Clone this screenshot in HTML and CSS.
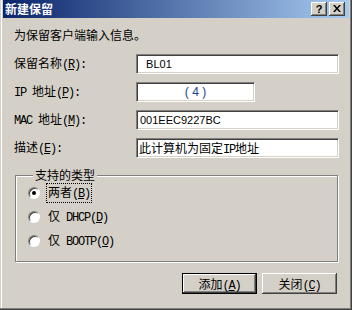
FILE: index.html
```html
<!DOCTYPE html>
<html lang="zh-CN">
  <head>
    <meta charset="UTF-8" />
    <title>新建保留</title>
    <link rel="stylesheet" href="styles.css">
  </head>
  <body>
    <div class="window">
      <div class="titlebar">
        <span class="title">新建保留</span>
        <div class="caption-buttons">
          <button class="caption-btn help">?</button>
          <button class="caption-btn close">
            <svg width="8" height="7" viewBox="0 0 8 7">
              <path d="M0 0h2l2 2.5L6 0h2L5 3.5 8 7H6L4 4.5 2 7H0l3-3.5z" fill="#000" />
            </svg>
          </button>
        </div>
      </div>

      <div class="content">
        <p class="intro">为保留客户端输入信息。</p>

        <div class="fields">
          <label class="field-label" for="name">保留名称<span class="lat">(<u>R</u>):</span></label>
          <input class="edit name-edit" id="name" value="  BL01" readonly />

          <label class="field-label" for="ip"><span class="lat">IP </span>地址<span class="lat">(<u>P</u>):</span></label>
          <div class="edit ip-edit" id="ip">( 4 )</div>

          <label class="field-label" for="mac"><span class="lat">MAC </span>地址<span class="lat">(<u>M</u>):</span></label>
          <input class="edit" id="mac" value="001EEC9227BC" readonly />

          <label class="field-label" for="desc">描述<span class="lat">(<u>E</u>):</span></label>
          <div class="edit desc-edit" id="desc">此计算机为固定<span class="lat">IP</span>地址</div>
        </div>

        <fieldset class="group">
          <legend>支持的类型</legend>
          <label class="radio-row">
            <span class="radio checked"></span>
            <span class="radio-text focused">两者<span class="lat">(<u>B</u>)</span></span>
          </label>
          <label class="radio-row">
            <span class="radio"></span>
            <span class="radio-text">仅<span class="lat"> DHCP(<u>D</u>)</span></span>
          </label>
          <label class="radio-row">
            <span class="radio"></span>
            <span class="radio-text">仅<span class="lat"> BOOTP(<u>O</u>)</span></span>
          </label>
        </fieldset>

        <div class="actions">
          <button class="push-btn default">添加<span class="lat">(<u>A</u>)</span></button>
          <button class="push-btn">关闭<span class="lat">(<u>C</u>)</span></button>
        </div>
      </div>
    </div>
  </body>
</html>
```

FILE: styles.css
```css
* {
  margin: 0;
  padding: 0;
  box-sizing: border-box;
}

body {
  font-family: "Noto Sans CJK SC", sans-serif;
  font-size: 12px;
  line-height: 16px;
  color: #000;
  background-color: #d4d0c8;
}

/* latin parts of the labels, narrow like the old bitmap font */
.lat {
  font-family: "Liberation Mono", monospace;
  letter-spacing: -1.2px;
}

.window {
  width: 352px;
  height: 310px;
  background-color: #d4d0c8;
  padding: 0 3px 3px 3px;
  box-shadow: inset -1px -1px #404040, inset -2px -2px #808080,
    inset 1px 0 #d4d0c8, inset 2px 0 #fff;
}

.titlebar {
  height: 18px;
  background: linear-gradient(to right, #0a246a, #a6caf0);
  display: flex;
  align-items: center;
  justify-content: space-between;
  padding: 0 4px 0 2px;
}

.title {
  font-weight: 700;
  font-size: 12px;
  color: #fff;
}

.caption-buttons {
  display: flex;
  gap: 2px;
}

.caption-btn {
  width: 16px;
  height: 14px;
  background-color: #d4d0c8;
  border: none;
  box-shadow: inset -1px -1px #404040, inset 1px 1px #fff,
    inset -2px -2px #808080;
  font-family: "Liberation Sans", sans-serif;
  font-weight: 700;
  font-size: 11px;
  line-height: 14px;
  display: flex;
  align-items: center;
  justify-content: center;
  padding-bottom: 1px;
}

.content {
  padding: 9px 10px 0 11px;
}

.intro {
  margin-bottom: 11px;
}

.fields {
  display: grid;
  grid-template-columns: 122px 1fr;
  grid-auto-rows: 20px;
  row-gap: 8px;
  align-items: center;
}

u {
  text-underline-offset: 1px;
}

.edit {
  height: 20px;
  width: 100%;
  background-color: #fff;
  border: 1px solid;
  border-color: #808080 #fff #fff #808080;
  box-shadow: inset 1px 1px #404040, inset -1px -1px #d4d0c8;
  font-family: "Liberation Sans", sans-serif;
  font-size: 11px;
  padding: 0 3px;
  outline: none;
  color: #000;
}

.ip-edit {
  width: 119px;
  text-align: center;
  line-height: 18px;
  color: #1a3c8c;
  font-size: 12px;
}

.desc-edit {
  font-family: "Noto Sans CJK SC", sans-serif;
  font-size: 12px;
  line-height: 18px;
  padding-left: 2px;
}

.group {
  margin: 10px 1px 0 1px;
  border: 1px solid #808080;
  box-shadow: inset 1px 1px #fff, 1px 1px #fff;
  padding: 3px 0 12px 12px;
  display: flex;
  flex-direction: column;
  gap: 8px;
}

.group legend {
  line-height: 14px;
  margin-left: 5px;
  padding: 0 2px;
  background-color: #d4d0c8;
}

.radio-row {
  display: flex;
  align-items: center;
  height: 16px;
  gap: 7px;
}

.radio {
  width: 12px;
  height: 12px;
  border-radius: 50%;
  background-color: #fff;
  border: 1px solid;
  border-color: #808080 #fff #fff #808080;
  box-shadow: inset 1px 1px #404040;
  display: flex;
  align-items: center;
  justify-content: center;
}

.radio.checked::after {
  content: "";
  width: 4px;
  height: 4px;
  border-radius: 50%;
  background-color: #000;
}

.radio-text {
  padding: 0 1px;
}

.radio-text.focused {
  outline: 1px dotted #000;
  outline-offset: 0;
}

.actions {
  display: flex;
  justify-content: flex-end;
  gap: 5px;
  margin-top: 11px;
  padding-right: 2px;
}

.push-btn {
  width: 75px;
  height: 21px;
  background-color: #d4d0c8;
  border: none;
  box-shadow: inset -1px -1px #404040, inset 1px 1px #fff,
    inset -2px -2px #808080;
  font-family: "Noto Sans CJK SC", sans-serif;
  font-size: 12px;
  color: #000;
}

.push-btn.default {
  border: 1px solid #000;
}
```
